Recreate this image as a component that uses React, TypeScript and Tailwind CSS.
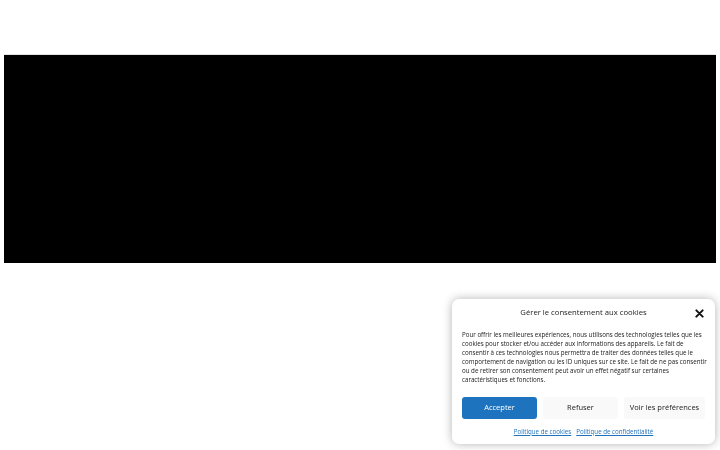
export default function App() {
  return (
    <div className="relative h-[450px] w-[720px] overflow-hidden bg-white" style={{ fontFamily: '"Open Sans", sans-serif' }}>
      <div className="px-[4px] pt-[54px]">
        <div className="h-[209px] w-[712px] border-t border-[#e4e4e4] bg-black" />
      </div>

      {/* cookie consent banner */}
      <div className="fixed bottom-[6px] right-[5px] w-[263px] rounded-[7px] bg-white px-[10px] pb-[8px] pt-[8px] shadow-[0_0_10px_rgba(0,0,0,0.3)]">
        <div className="relative flex h-[12px] items-center justify-center">
          <span className="text-[7.7px] leading-none text-[#222]">Gérer le consentement aux cookies</span>
          <svg className="absolute right-[1px] top-[2px]" width="9" height="9" viewBox="0 0 10 10">
            <path d="M1.5 1.5 8.5 8.5M8.5 1.5 1.5 8.5" stroke="#111" strokeWidth="2.2" strokeLinecap="round" />
          </svg>
        </div>
        <p className="mr-[-5px] mt-[12px] text-[6.2px] leading-[8.9px] text-[#1a1a1a]">
          Pour offrir les meilleures expériences, nous utilisons des technologies telles que les cookies pour stocker
          et/ou accéder aux informations des appareils. Le fait de consentir à ces technologies nous permettra de
          traiter des données telles que le comportement de navigation ou les ID uniques sur ce site. Le fait de ne
          pas consentir ou de retirer son consentement peut avoir un effet négatif sur certaines caractéristiques et
          fonctions.
        </p>
        <div className="mt-[12px] grid grid-cols-[75px_75px_81px] gap-[6px]">
          <button className="h-[22px] rounded-[3px] bg-[#1e73be] text-[7.5px] text-white">Accepter</button>
          <button className="h-[22px] rounded-[3px] bg-[#f9f9f9] text-[7.5px] text-[#222]">Refuser</button>
          <button className="h-[22px] rounded-[3px] bg-[#f9f9f9] text-[7.5px] text-[#222]">Voir les préférences</button>
        </div>
        <div className="mt-[8px] flex justify-center gap-[5px] text-[6.2px] text-[#1e73be] underline">
          <span>Politique de cookies</span>
          <span>Politique de confidentialité</span>
        </div>
      </div>
    </div>
  );
}
